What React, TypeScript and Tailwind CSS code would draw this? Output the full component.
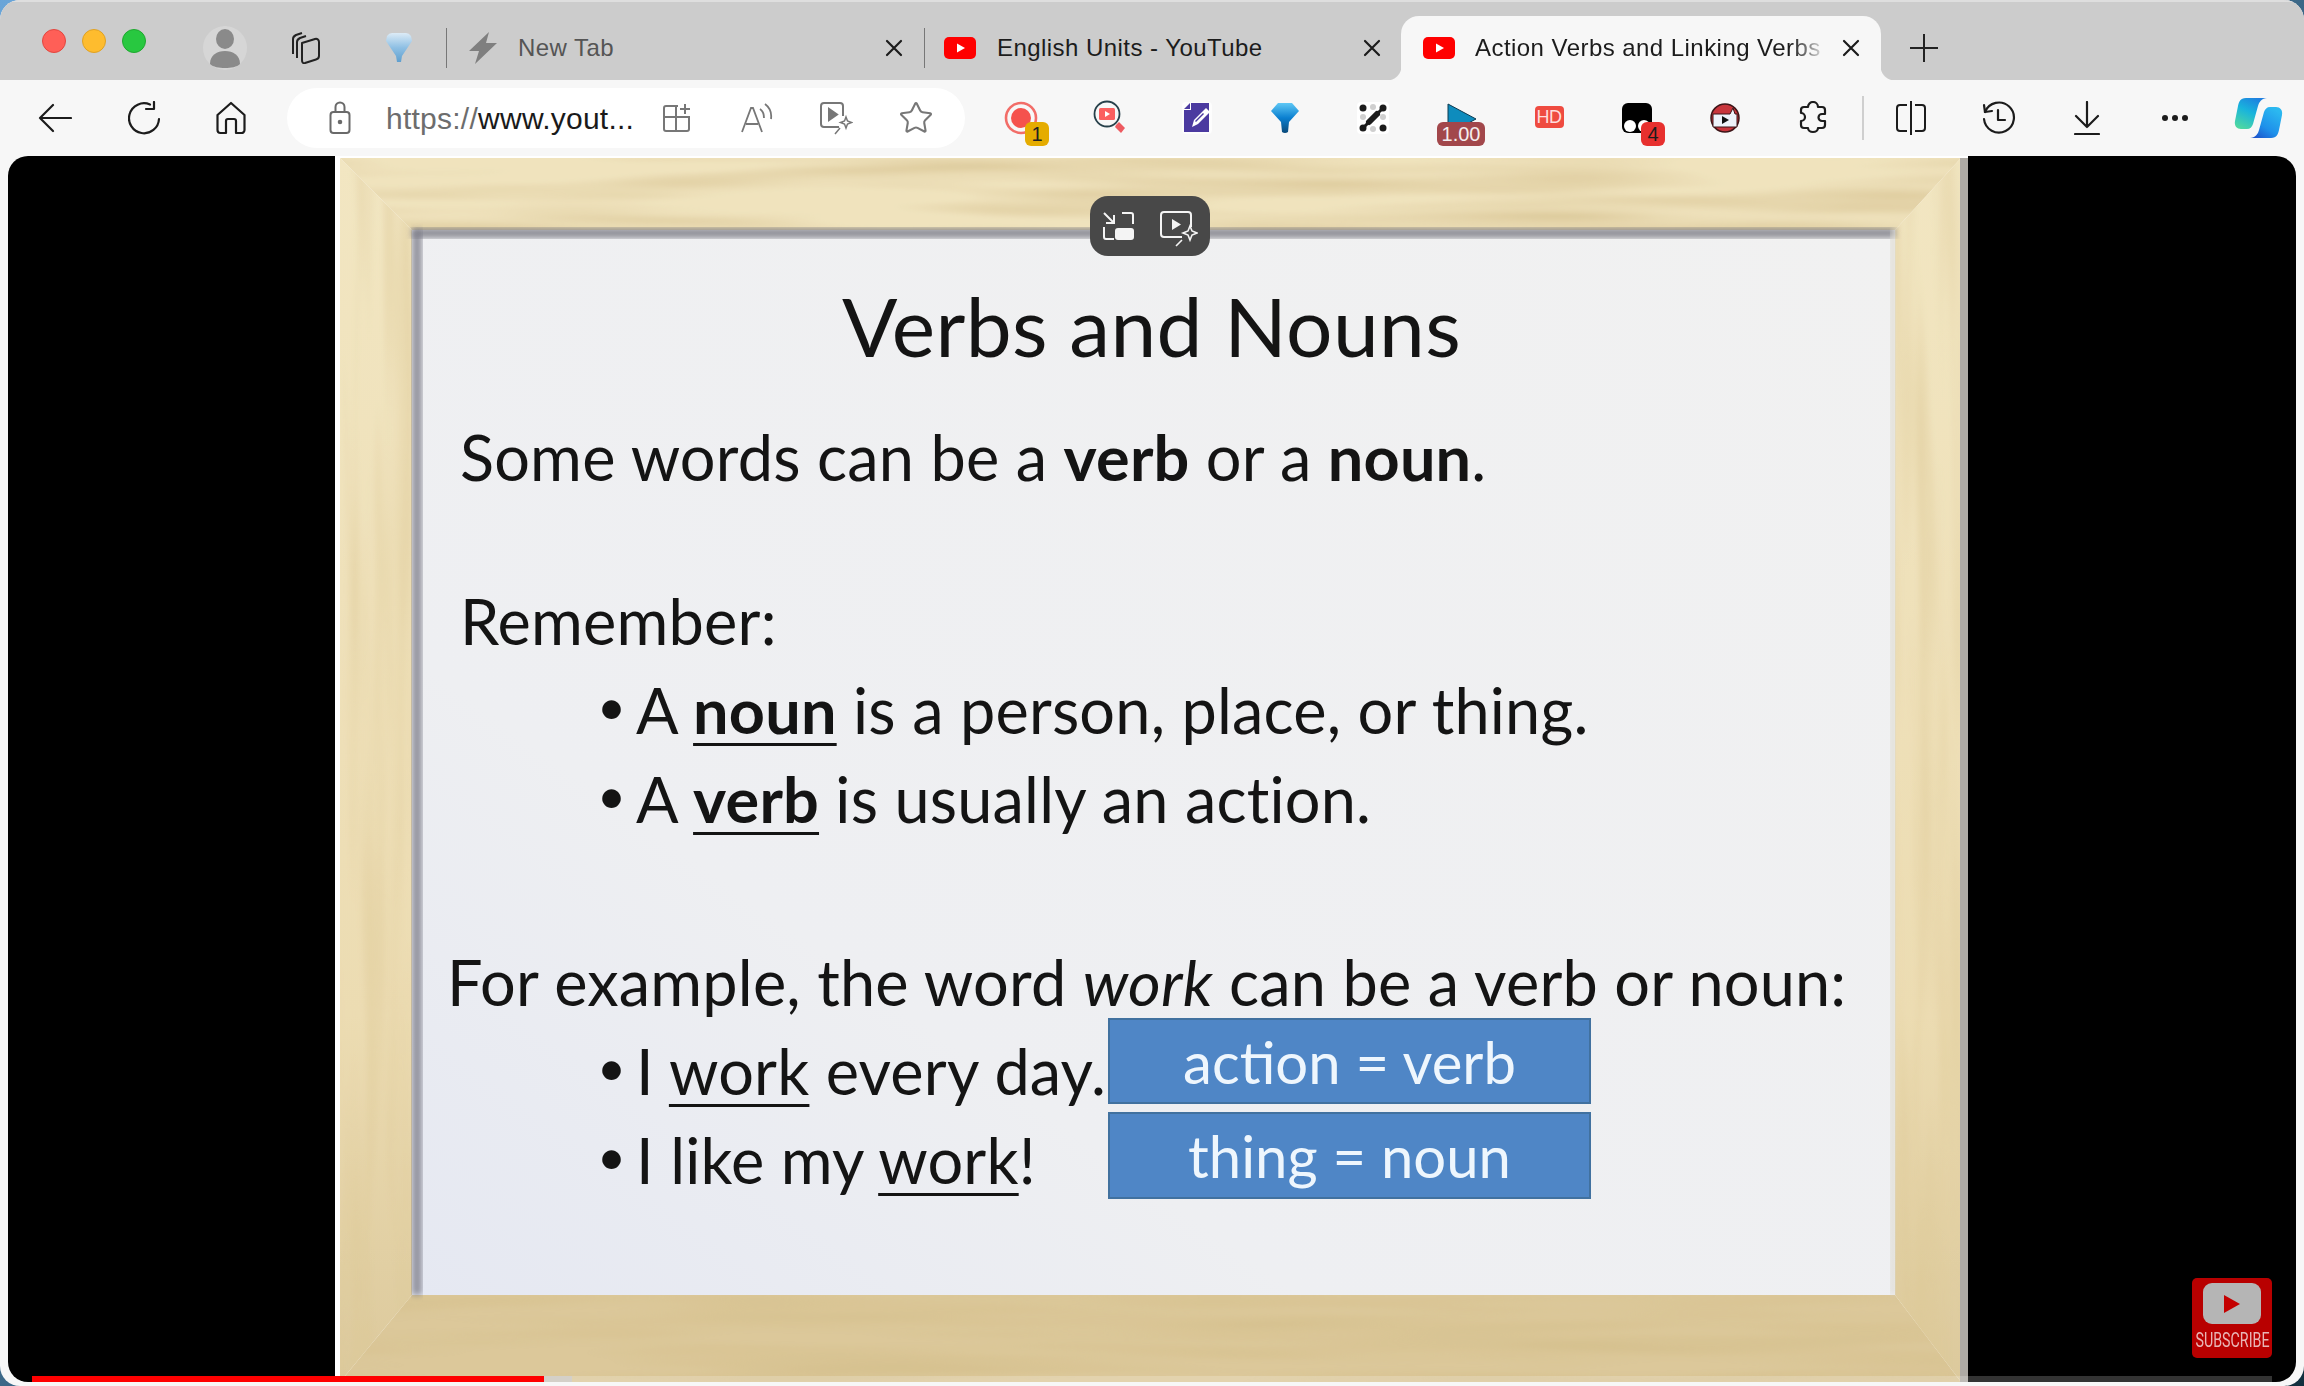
import React from 'react';
import { Star } from 'lucide-react';

const CHROME = "font-['Liberation_Sans',Arial,sans-serif]";
const SLIDE = "font-['Lato','Noto_Sans',sans-serif]";

const YouTubeIcon = () => (
  <svg width="32" height="22" viewBox="0 0 32 22" className="shrink-0">
    <rect width="32" height="22" rx="5" fill="#f00" />
    <path d="M13 6.500v9l8-4.500z" fill="#fff" />
  </svg>
);

const CloseIcon = ({ color = '#1c1c1c' }: { color?: string }) => (
  <svg width="18" height="18" viewBox="0 0 18 18" fill="none" stroke={color} strokeWidth="2.200" strokeLinecap="round">
    <path d="M2 2l14 14M16 2L2 16" />
  </svg>
);

// one toolbar cell, every icon sits on the same 88px pitch
const Slot = ({ children }: { children: React.ReactNode }) => (
  <div className="relative w-[88px] h-[76px] shrink-0 flex items-center justify-center">{children}</div>
);

const Badge = ({ text, className }: { text: string; className: string }) => (
  <span className={`absolute flex items-center justify-center rounded-[6px] h-[24px] text-[20px] leading-none ${CHROME} ${className}`}>{text}</span>
);

const TitleBar = () => (
  <div className="relative h-[80px] shrink-0 bg-[#cccccc] border-t-2 border-[#dedede] flex items-center pt-[14px] pl-[42px]">
    <div className="flex gap-[16px] -mt-[14px]">
      <span className="w-[24px] h-[24px] rounded-full bg-[#ff5f57] border border-[#e2463f]" />
      <span className="w-[24px] h-[24px] rounded-full bg-[#febc2e] border border-[#dfa123]" />
      <span className="w-[24px] h-[24px] rounded-full bg-[#28c840] border border-[#1fa82f]" />
    </div>
    <div className="ml-[57px] w-[44px] h-[44px] rounded-full bg-[#d6d6d6] flex items-center justify-center shrink-0">
      <svg width="32" height="40" viewBox="0 0 32 40" fill="#8a8a8a">
        <ellipse cx="16" cy="11" rx="9" ry="10" />
        <path d="M1 36c0-9 7-13 15-13s15 4 15 13c-3 3-9 4-15 4S4 39 1 36z" />
      </svg>
    </div>
    <svg className="ml-[42px] shrink-0" width="32" height="32" viewBox="0 0 32 32" fill="none" stroke="#222" strokeWidth="2" strokeLinejoin="round">
      <path d="M4 22V7c0-2 1-3 3-4l6-2" />
      <path d="M8 26V10c0-2 1-3 3-4l6-2" />
      <path d="M13 11l13-4c2-.5 4 .5 4 3v14c0 2-1 3-3 3.500L16 31c-2 .5-3-.5-3-3z" />
    </svg>
    <svg className="ml-[64px] shrink-0" width="28" height="32" viewBox="0 0 28 32">
      <defs>
        <linearGradient id="gemTab" x1="0" y1="0" x2="0" y2="1">
          <stop offset="0" stopColor="#dcebf6" />
          <stop offset="0.5" stopColor="#8fc0e4" />
          <stop offset="1" stopColor="#5f9fce" />
        </linearGradient>
      </defs>
      <path d="M7 1h14q3 0 5 3l1 5L17 24l-1 6h-4l-1-6L1 9l1-5q2-3 5-3z" fill="url(#gemTab)" />
    </svg>
    <span className="ml-[33px] w-[1px] h-[40px] bg-[#777] shrink-0" />
    <div className={`w-[477px] shrink-0 flex items-center text-[24px] tracking-[0.45px] text-[#555] ${CHROME}`}>
      <svg className="ml-[22px] shrink-0" width="28" height="32" viewBox="0 0 28 32" fill="#7f7f7f">
        <path d="M20 0L0 19h10L6 32l22-21H17z" />
      </svg>
      <span className="ml-[21px] flex-1">New Tab</span>
      <span className="mr-[21px]"><CloseIcon /></span>
    </div>
    <span className="w-[1px] h-[40px] bg-[#777] shrink-0" />
    <div className={`w-[476px] shrink-0 flex items-center text-[24px] tracking-[0.45px] text-[#1c1c1c] ${CHROME}`}>
      <span className="ml-[19px] flex"><YouTubeIcon /></span>
      <span className="ml-[21px] flex-1 whitespace-nowrap">English Units - YouTube</span>
      <span className="mr-[20px]"><CloseIcon /></span>
    </div>
    <div className={`relative self-end w-[480px] h-[64px] shrink-0 bg-[#f7f7f7] rounded-t-[18px] flex items-center text-[24px] tracking-[0.45px] text-[#1c1c1c] ${CHROME}`}>
      <span className="absolute bottom-0 -left-[14px] w-[14px] h-[14px] bg-[radial-gradient(circle_at_0_0,#cccccc_14px,#f7f7f7_15px)]" />
      <span className="absolute bottom-0 -right-[14px] w-[14px] h-[14px] bg-[radial-gradient(circle_at_100%_0,#cccccc_14px,#f7f7f7_15px)]" />
      <span className="ml-[22px] flex"><YouTubeIcon /></span>
      <span className="ml-[20px] w-[352px] overflow-hidden whitespace-nowrap [mask-image:linear-gradient(to_right,black_90%,transparent)]">Action Verbs and Linking Verbs</span>
      <span className="ml-[15px]"><CloseIcon /></span>
    </div>
    <svg className="ml-[29px] shrink-0" width="28" height="28" viewBox="0 0 28 28" stroke="#222" strokeWidth="2">
      <path d="M14 0v28M0 14h28" />
    </svg>
  </div>
);

const AddressBar = () => (
  <div className="ml-[12px] w-[678px] h-[60px] shrink-0 rounded-full bg-white flex items-center">
    <svg className="ml-[42px] shrink-0" width="22" height="34" viewBox="0 0 22 34" fill="none" stroke="#6a6a6a" strokeWidth="2">
      <rect x="1.500" y="11" width="19" height="21" rx="3" />
      <path d="M6.500 11V6a4.500 4.500 0 0 1 9 0v5" />
      <circle cx="11" cy="21" r="1.300" fill="#6a6a6a" />
    </svg>
    <span className={`ml-[35px] w-[250px] shrink-0 whitespace-nowrap text-[30px] tracking-[0.25px] ${CHROME}`}>
      <span className="text-[#6d6d6d]">https://</span>
      <span className="text-[#1a1a1a]">www.yout...</span>
    </span>
    <svg className="ml-[26px] shrink-0" width="30" height="30" viewBox="0 0 30 30" fill="none" stroke="#777" strokeWidth="2">
      <path d="M16 3H4a2 2 0 0 0-2 2v21a2 2 0 0 0 2 2h21a2 2 0 0 0 2-2V14H2M14 3v25M23 1v10M18 6h10" />
    </svg>
    <svg className="ml-[48px] shrink-0" width="34" height="30" viewBox="0 0 34 30" fill="none" stroke="#777" strokeWidth="1.800">
      <path d="M2 29L11 5h2l9 24M6 21h12" />
      <path d="M20 6c3 2 4 5 4 9M25 1c4 3 7 8 6 15" />
    </svg>
    <svg className="ml-[45px] shrink-0" width="34" height="34" viewBox="0 0 34 34" fill="none" stroke="#777" strokeWidth="2">
      <path d="M20 26H5a3 3 0 0 1-3-3V5a3 3 0 0 1 3-3h16a3 3 0 0 1 3 3v10" />
      <path d="M10 8v11l8-5.500z" fill="#777" />
      <path d="M27 16l1.500 4 4 1.500-4 1.500-1.500 4-1.500-4-4-1.500 4-1.500zM21 27l-5 6" strokeWidth="1.500" />
    </svg>
    <Star className="ml-[45px] shrink-0" size={36} strokeWidth={1.4} color="#777" />
  </div>
);

const ToolBar = () => (
  <div className="h-[76px] shrink-0 bg-[#f7f7f7] flex items-center pl-[11px]">
    <Slot>
      <svg width="34" height="30" viewBox="0 0 34 30" fill="none" stroke="#1c1c1c" strokeWidth="2.200" strokeLinecap="round" strokeLinejoin="round">
        <path d="M33 15H2M15 2L2 15l13 13" />
      </svg>
    </Slot>
    <Slot>
      <svg className="ml-[3px]" width="34" height="34" viewBox="0 0 34 34" fill="none" stroke="#1c1c1c" strokeWidth="2.200" strokeLinecap="round" strokeLinejoin="round">
        <path d="M22 3.500A15 15 0 1 0 31 18" />
        <path d="M26 1v7h-8" />
      </svg>
    </Slot>
    <Slot>
      <svg width="32" height="34" viewBox="0 0 32 34" fill="none" stroke="#1c1c1c" strokeWidth="2.200" strokeLinejoin="round">
        <path d="M2.500 14L16 2l13.500 12v15a3 3 0 0 1-3 3H21V20a2 2 0 0 0-2-2h-6a2 2 0 0 0-2 2v12H5.500a3 3 0 0 1-3-3z" />
      </svg>
    </Slot>
    <AddressBar />
    <div className="w-[12px] shrink-0" />
    <Slot>
      <svg width="34" height="34" viewBox="0 0 34 34">
        <circle cx="17" cy="17" r="15" fill="none" stroke="#f26d68" strokeWidth="2.600" />
        <circle cx="17" cy="17" r="10" fill="#f5524d" />
      </svg>
      <Badge text="1" className="left-[48px] top-[42px] w-[24px] bg-[#e5ac00] text-[#222]" />
    </Slot>
    <Slot>
      <svg width="32" height="36" viewBox="0 0 32 36">
        <circle cx="14" cy="14" r="12.500" fill="none" stroke="#27404a" strokeWidth="1.800" />
        <rect x="6" y="8" width="16" height="12" rx="1.500" fill="#fb5f5f" />
        <path d="M12 11v6l5-3z" fill="#fff" />
        <path d="M23 25l3-3 6 6-4 5-6-6z" fill="#ee5a60" />
      </svg>
    </Slot>
    <Slot>
      <svg width="30" height="32" viewBox="0 0 30 32">
        <rect width="30" height="32" rx="4" fill="#fdfdfd" />
        <path d="M9 1h18v29H2V8h7zM2 7l6-6v6z" fill="#4b3aa0" />
        <path d="M10 25l2-7L24 6l4 4-12 12z" fill="#fff" />
        <path d="M13 19l8-8 1 1-8 8z" fill="#4b3aa0" />
      </svg>
    </Slot>
    <Slot>
      <svg width="28" height="32" viewBox="0 0 28 32">
        <defs>
          <linearGradient id="funnel" x1="0" y1="0" x2="0" y2="1">
            <stop offset="0" stopColor="#5fc8f5" />
            <stop offset="0.5" stopColor="#0a7fd0" />
            <stop offset="1" stopColor="#0a4a7a" />
          </linearGradient>
        </defs>
        <path d="M7 1h14l7 8-10 11-1 10q-3 2-6 0l-1-10L0 9z" fill="url(#funnel)" />
      </svg>
    </Slot>
    <Slot>
      <svg width="32" height="32" viewBox="0 0 32 32">
        <rect width="32" height="32" rx="4" fill="#fff" />
        <g fill="#cfcfcf">
          <circle cx="6" cy="15" r="3" />
          <circle cx="26" cy="15" r="3" />
          <circle cx="16" cy="5" r="3" />
          <circle cx="16" cy="27" r="3" />
        </g>
        <g fill="#1c1c1c">
          <circle cx="6" cy="6" r="3.500" />
          <circle cx="26" cy="6" r="3.500" />
          <circle cx="6" cy="26" r="3.500" />
          <circle cx="26" cy="26" r="3.500" />
        </g>
        <path d="M6 26L13 19 19 13 26 6" stroke="#1c1c1c" strokeWidth="3" />
        <path d="M12 20L20 12" stroke="#1c1c1c" strokeWidth="6" strokeLinecap="round" />
      </svg>
    </Slot>
    <Slot>
      <svg className="absolute left-[30px] top-[23px]" width="30" height="24" viewBox="0 0 30 24">
        <path d="M1 1l28 15L14 24H1z" fill="#0e8cbd" stroke="#0d3a50" strokeWidth="1" />
      </svg>
      <Badge text="1.00" className="left-[20px] top-[42px] w-[48px] bg-[#a2474b] text-[#f4eeee]" />
    </Slot>
    <Slot>
      <span className={`mb-[3px] w-[29px] h-[22px] rounded-[4px] bg-[#ef4b40] text-[#fdd] text-[18px] leading-[22px] text-center tracking-[-0.5px] ${CHROME}`}>HD</span>
    </Slot>
    <Slot>
      <svg className="absolute left-[29px] top-[23px]" width="30" height="30" viewBox="0 0 30 30">
        <rect width="30" height="30" rx="6" fill="#000" />
        <circle cx="8" cy="23" r="6" fill="#fff" />
        <circle cx="22" cy="23" r="6" fill="#fff" />
      </svg>
      <Badge text="4" className="left-[48px] top-[42px] w-[24px] bg-[#e7302e] text-[#1c1c1c]" />
    </Slot>
    <Slot>
      <svg width="30" height="30" viewBox="0 0 30 30">
        <circle cx="15" cy="15" r="14" fill="#c8353c" stroke="#3c1518" strokeWidth="1.500" />
        <path d="M3 11h17l3-6 2 6h2v13H3z" fill="#eef3fa" stroke="#3c1518" strokeWidth="1" />
        <path d="M12 13v8l7-4z" fill="#111" />
      </svg>
    </Slot>
    <Slot>
      <svg width="30" height="34" viewBox="0 0 30 34" fill="none" stroke="#1c1c1c" strokeWidth="2.200" strokeLinejoin="round">
        <path d="M10 6a5 5 0 0 1 10 0h4a3 3 0 0 1 3 3v4h-3a3.500 3.500 0 0 0 0 7h3v4a3 3 0 0 1-3 3h-4a5 4 0 0 1-10 0H6a3 3 0 0 1-3-3v-4a4 4 0 0 0 0-8V9a3 3 0 0 1 3-3z" />
      </svg>
    </Slot>
    <span className="w-[2px] h-[44px] bg-[#cfcfcf] ml-[5px] mr-[3px] shrink-0" />
    <Slot>
      <svg width="30" height="34" viewBox="0 0 30 34" fill="none" stroke="#1c1c1c" strokeWidth="2">
        <path d="M11 4H4a3 3 0 0 0-3 3v20a3 3 0 0 0 3 3h7M19 4h7a3 3 0 0 1 3 3v20a3 3 0 0 1-3 3h-7M15 0v34" />
      </svg>
    </Slot>
    <Slot>
      <svg width="34" height="34" viewBox="0 0 34 34" fill="none" stroke="#1c1c1c" strokeWidth="2.200" strokeLinecap="round" strokeLinejoin="round">
        <path d="M2 4l1 7 7-1" />
        <path d="M3 11A15 15 0 1 1 2 18" />
        <path d="M16 9v10h7" />
      </svg>
    </Slot>
    <Slot>
      <svg width="26" height="34" viewBox="0 0 26 34" fill="none" stroke="#1c1c1c" strokeWidth="2.200" strokeLinecap="round" strokeLinejoin="round">
        <path d="M13 1v25M2 15l11 11 11-11M1 33h24" />
      </svg>
    </Slot>
    <Slot>
      <svg width="28" height="8" viewBox="0 0 28 8" fill="#1c1c1c">
        <circle cx="4" cy="4" r="3" />
        <circle cx="14" cy="4" r="3" />
        <circle cx="24" cy="4" r="3" />
      </svg>
    </Slot>
    <div className="ml-[15px] shrink-0 flex">
      <svg width="49" height="42" viewBox="0 0 49 42">
        <defs>
          <linearGradient id="copA" x1="0.7" y1="0" x2="0.2" y2="1">
            <stop offset="0" stopColor="#1f7fe0" />
            <stop offset="0.45" stopColor="#19b4dc" />
            <stop offset="1" stopColor="#4fd8a0" />
          </linearGradient>
          <linearGradient id="copB" x1="0.8" y1="0.1" x2="0.2" y2="1">
            <stop offset="0" stopColor="#2bb8f0" />
            <stop offset="0.6" stopColor="#1e90ea" />
            <stop offset="1" stopColor="#1c55cc" />
          </linearGradient>
        </defs>
        <path d="M12 1C6 1 5 5 4 9L1 24c-1 5 2 8 6 8h6c3 0 5-2 6-5l5-18c1-4 4-8 9-8z" fill="url(#copA)" />
        <path d="M37 41c6 0 7-4 8-8l3-15c1-5-2-8-6-8h-6c-3 0-5 2-6 5l-5 18c-1 4-4 8-9 8z" fill="url(#copB)" />
      </svg>
    </div>
  </div>
);

// wood frame and the whiteboard behind the slide text
const SlideBackdrop = () => (
  <svg className="absolute inset-0" width="1633" height="1226" viewBox="0 0 1633 1226">
    <defs>
      <filter id="grainH" x="0" y="0" width="100%" height="100%">
        <feTurbulence type="fractalNoise" baseFrequency="0.003 0.05" numOctaves="2" seed="4" />
        <feColorMatrix values="0 0 0 0 0.66  0 0 0 0 0.52  0 0 0 0 0.26  0 0 0 1.5 -0.55" />
        <feGaussianBlur stdDeviation="1.500" />
        <feComposite in2="SourceGraphic" operator="in" />
        <feMerge>
          <feMergeNode in="SourceGraphic" />
          <feMergeNode />
        </feMerge>
      </filter>
      <filter id="grainV" x="0" y="0" width="100%" height="100%">
        <feTurbulence type="fractalNoise" baseFrequency="0.05 0.003" numOctaves="2" seed="9" />
        <feColorMatrix values="0 0 0 0 0.72  0 0 0 0 0.58  0 0 0 0 0.3  0 0 0 1.2 -0.45" />
        <feGaussianBlur stdDeviation="1.500" />
        <feComposite in2="SourceGraphic" operator="in" />
        <feMerge>
          <feMergeNode in="SourceGraphic" />
          <feMergeNode />
        </feMerge>
      </filter>
      <linearGradient id="board" x1="0" y1="1" x2="1" y2="0">
        <stop offset="0" stopColor="#e5e8f2" />
        <stop offset="0.3" stopColor="#eeeff2" />
        <stop offset="1" stopColor="#f1f1f1" />
      </linearGradient>
      <linearGradient id="woodSide" x1="0" y1="0" x2="0" y2="1">
        <stop offset="0" stopColor="#f2e6c2" />
        <stop offset="0.7" stopColor="#ecdcb2" />
        <stop offset="1" stopColor="#dcc99c" />
      </linearGradient>
      <filter id="soft"><feGaussianBlur stdDeviation="3" /></filter>
    </defs>
    <rect width="1633" height="1226" fill="#fff" />
    <path d="M5 2H1626L1560 74H77z" fill="#f0e3bd" filter="url(#grainH)" />
    <path d="M5 1226L77 1139H1560L1626 1226z" fill="#dcc89a" filter="url(#grainH)" />
    <path d="M5 2L77 74V1139L5 1226z" fill="url(#woodSide)" filter="url(#grainV)" />
    <path d="M1626 2L1560 74V1139L1626 1226z" fill="url(#woodSide)" filter="url(#grainV)" />
    <rect x="1625" y="2" width="8" height="1224" fill="#aeaaa4" />
    <rect x="77" y="74" width="1483" height="1065" fill="url(#board)" />
    <rect x="77" y="72" width="1483" height="10" fill="#6e6e78" opacity="0.75" filter="url(#soft)" />
    <rect x="77" y="74" width="10" height="1065" fill="#7c7c88" opacity="0.8" filter="url(#soft)" />
    <rect x="1556" y="74" width="4" height="1065" fill="#d8d4c8" filter="url(#soft)" />
  </svg>
);

const Line = ({ children, className = '' }: { children: React.ReactNode; className?: string }) => (
  <div className={`h-[89px] leading-[89px] whitespace-nowrap ${className}`}>{children}</div>
);

const Bullet = ({ children }: { children: React.ReactNode }) => (
  <Line className="flex items-baseline pl-[262px]">
    <span className="w-[39px] shrink-0 text-[50px] -translate-y-[9px]">•</span>
    <span>{children}</span>
  </Line>
);

const U = ({ children, bold }: { children: React.ReactNode; bold?: boolean }) => (
  <span className={`underline decoration-[3px] underline-offset-[9px] ${bold ? 'font-bold' : ''}`}>{children}</span>
);

const BlueBox = ({ children, h }: { children: React.ReactNode; h: string }) => (
  <div className={`w-[483px] ${h} bg-[#4f86c6] border-2 border-[#41719f] text-[58px] tracking-normal text-[#eef6fd] flex items-center justify-center`}>{children}</div>
);

const Slide = () => (
  <div className="relative w-[1633px] h-[1226px] shrink-0">
    <SlideBackdrop />
    <div className={`relative pt-[119px] text-[63px] tracking-[0.2px] text-[#141414] blur-[0.6px] ${SLIDE}`}>
      <div className="h-[100px] leading-[100px] text-center text-[82px] tracking-[0.4px]">Verbs and Nouns</div>
      <Line className="mt-[37px] pl-[125px]">Some words can be a <b>verb</b> or a <b>noun</b>.</Line>
      <Line className="mt-[75px] pl-[125px]">Remember:</Line>
      <Bullet>A <U bold>noun</U> is a person, place, or thing.</Bullet>
      <Bullet>A <U bold>verb</U> is usually an action.</Bullet>
      <Line className="mt-[94px] pl-[112px]">For example, the word <i>work</i> can be a verb or noun:</Line>
      <div className="flex">
        <div className="w-[773px] shrink-0">
          <Bullet>I <U>work</U> every day.</Bullet>
          <Bullet>I like my <U>work</U>!</Bullet>
        </div>
        <div className="-mt-[8px] flex flex-col gap-[8px]">
          <BlueBox h="h-[86px]">action = verb</BlueBox>
          <BlueBox h="h-[87px]">thing = noun</BlueBox>
        </div>
      </div>
    </div>
    {/* pip and video-search overlay */}
    <div className="absolute left-[755px] top-[40px] w-[120px] h-[60px] rounded-[18px] bg-[#484848] flex items-center pl-[12px] gap-[26px]">
      <svg width="32" height="30" viewBox="0 0 32 30" fill="none" stroke="#f4f4f4" strokeWidth="2">
        <path d="M20 2h9a2 2 0 0 1 2 2v9M2 16v10a2 2 0 0 0 2 2h8M2 2l10 10M4 12h8V4" />
        <rect x="13" y="17" width="19" height="12" rx="3" fill="#f4f4f4" stroke="none" />
      </svg>
      <svg className="mt-[5px]" width="38" height="36" viewBox="0 0 38 36" fill="none" stroke="#f4f4f4" strokeWidth="2">
        <path d="M22 26H4a3 3 0 0 1-3-3V4a3 3 0 0 1 3-3h24a3 3 0 0 1 3 3v12" />
        <path d="M12 8v11l9-5.500z" fill="#f4f4f4" stroke="none" />
        <path d="M30 15l2 5 5 2-5 2-2 5-2-5-5-2 5-2zM22 29l-6 6" strokeWidth="1.600" />
      </svg>
    </div>
  </div>
);

const SubscribeBadge = () => (
  <div className="absolute right-[24px] top-[1122px] w-[80px] h-[80px] rounded-[5px] bg-[#b80000] flex flex-col items-center pt-[5px]">
    <div className="w-[58px] h-[41px] rounded-[9px] bg-[#b5b5b5] flex items-center justify-center">
      <svg width="16" height="18" viewBox="0 0 16 18"><path d="M0 0v18l16-9z" fill="#c40000" /></svg>
    </div>
    <span className="mt-[6px] inline-block scale-x-[0.68] text-[21px] leading-[20px] text-[#e8b5b5] font-['Roboto',sans-serif] whitespace-nowrap">SUBSCRIBE</span>
  </div>
);

const ProgressBar = () => (
  <div className="absolute left-[24px] right-[24px] bottom-0 h-[6px] flex bg-white/20">
    <div className="w-[512px] bg-[#ff0000]" />
    <div className="w-[28px] bg-[#d4d0c8]" />
  </div>
);

const App: React.FC = () => (
  <div className="w-[2304px] h-[1386px] overflow-hidden bg-gradient-to-br from-[#6aa5d8] to-[#12303f]">
    <div className="w-full h-full rounded-[20px] overflow-hidden bg-[#f7f7f7] flex flex-col">
      <TitleBar />
      <ToolBar />
      <div className="relative mx-[8px] h-[1226px] rounded-[20px] overflow-hidden bg-black flex pl-[327px]">
        <Slide />
        <SubscribeBadge />
        <ProgressBar />
      </div>
    </div>
  </div>
);

export default App;
